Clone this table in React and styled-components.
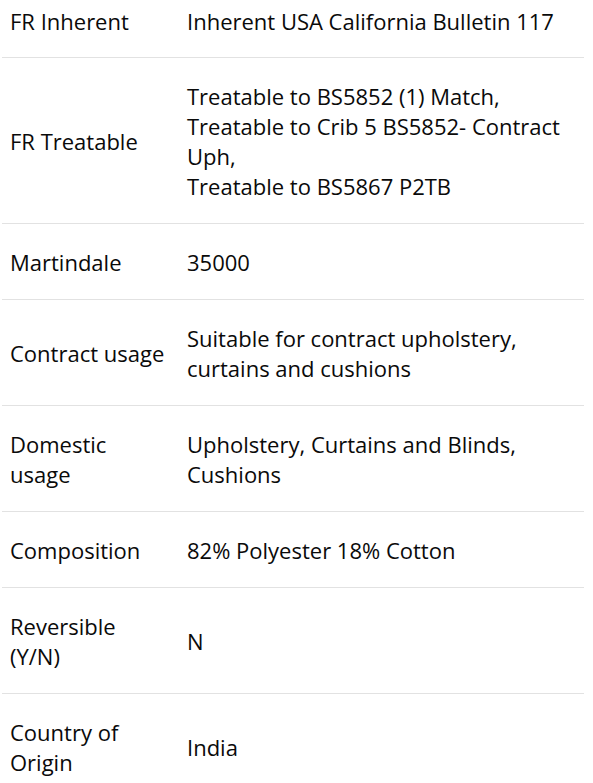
import React from "react";
import styled, { createGlobalStyle } from "styled-components";

const GlobalStyle = createGlobalStyle`
  body {
    margin: 0;
    background: #fff;
    font-family: "Open Sans", "Liberation Sans", sans-serif;
    color: #0a0a0a;
  }
`;

const Wrapper = styled.div`
  width: 582px;
  margin-left: 2px;
`;

const Table = styled.table`
  width: 100%;
  border-collapse: collapse;
  table-layout: fixed;
`;

const Row = styled.tr`
  border-bottom: 1px solid #e2e2e2;

  &:first-child td {
    padding-top: 6px;
    padding-bottom: 21px;
  }
`;

const Label = styled.td`
  width: 177px;
  padding: 23px 11px 22px 8px;
  font-size: 22px;
  line-height: 30px;
  vertical-align: middle;
  box-sizing: border-box;
`;

const Value = styled.td`
  padding: 23px 8px 22px;
  font-size: 22px;
  line-height: 30px;
  vertical-align: middle;
`;

const specs = [
  ["FR Inherent", ["Inherent USA California Bulletin 117"]],
  [
    "FR Treatable",
    [
      "Treatable to BS5852 (1) Match,",
      "Treatable to Crib 5 BS5852- Contract Uph,",
      "Treatable to BS5867 P2TB",
    ],
  ],
  ["Martindale", ["35000"]],
  ["Contract usage", ["Suitable for contract upholstery, curtains and cushions"]],
  ["Domestic usage", ["Upholstery, Curtains and Blinds, Cushions"]],
  ["Composition", ["82% Polyester 18% Cotton"]],
  ["Reversible (Y/N)", ["N"]],
  ["Country of Origin", ["India"]],
];

export default function App() {
  return (
    <Wrapper>
      <GlobalStyle />
      <Table>
        <tbody>
          {specs.map(([label, lines]) => (
            <Row key={label}>
              <Label>{label}</Label>
              <Value>
                {lines.map((line, i) => (
                  <React.Fragment key={i}>
                    {i > 0 && <br />}
                    {line}
                  </React.Fragment>
                ))}
              </Value>
            </Row>
          ))}
        </tbody>
      </Table>
    </Wrapper>
  );
}
